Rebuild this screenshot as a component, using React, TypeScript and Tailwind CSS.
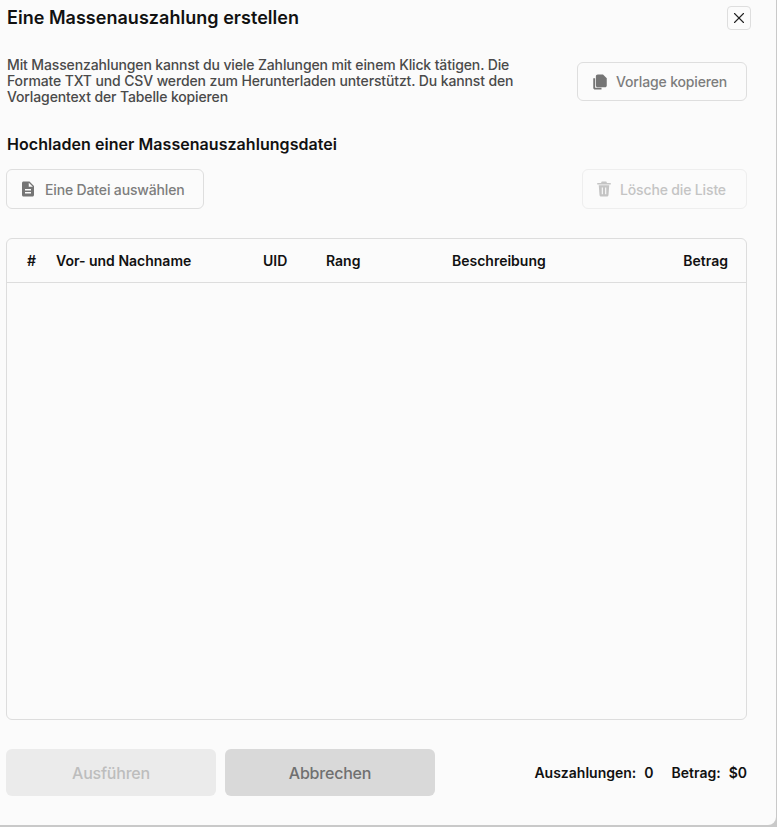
import { X } from "lucide-react";

const font = { fontFamily: "Inter, sans-serif" };

function FileIcon() {
  return (
    <svg viewBox="0 0 24 24" className="w-[18px] h-[18px] fill-[#757575]">
      <path d="M14 2H6c-1.1 0-2 .9-2 2v16c0 1.1.9 2 2 2h12c1.100 0 2-.9 2-2V8l-6-6zm2 16H8v-2h8v2zm0-4H8v-2h8v2zm-3-5V3.500L18.500 9H13z" />
    </svg>
  );
}

function CopyIcon() {
  return (
    <svg viewBox="0 0 24 24" className="w-[18px] h-[18px] fill-[#757575]">
      <path d="M3 7h2.500v12.500H14V22H5.500C4 22 3 21 3 19.500V7z" />
      <path d="M9 2h7l5 5v9.500c0 1.400-1 2.500-2.500 2.500H9c-1.400 0-2.500-1-2.500-2.500v-12C6.500 3 7.600 2 9 2z" />
    </svg>
  );
}

function TrashIcon() {
  return (
    <svg viewBox="0 0 24 24" className="w-[18px] h-[18px] fill-[#c4c4c4]">
      <path d="M9 2h6l1 2h5v2H3V4h5l1-2z" />
      <path d="M5 7h14l-1 13c0 1.100-.9 2-2 2H8c-1.100 0-2-.9-2-2L5 7zm4 3v9h1.500v-9H9zm4.500 0v9H15v-9h-1.500z" fillRule="evenodd" />
    </svg>
  );
}

export default function App() {
  return (
    <div className="w-[777px] h-[827px] bg-[#c9c9c9] overflow-hidden" style={font}>
      <div className="w-[776px] h-[825px] bg-[#fbfbfb] rounded-br-[8px] pl-[6px] pr-[29px] flex flex-col">
        {/* Title */}
        <div className="flex items-start justify-between h-[62px] pt-[6px] mr-[-4px]">
          <h1 className="ml-[1px] text-[18px] leading-[24px] font-semibold tracking-[0.03px] text-[#111]">
            Eine Massenauszahlung erstellen
          </h1>
          <button className="w-[24px] h-[24px] border border-[#dedede] rounded-[4px] flex items-center justify-center text-[#222]">
            <X size={18} strokeWidth={1.5} />
          </button>
        </div>

        {/* Intro */}
        <div className="flex items-start justify-between h-[62px]">
          <p className="ml-[1px] w-[520px] text-[14px] leading-[16px] tracking-[-0.13px] font-medium text-[#4a4a4a] mt-[-5px]">
            Mit Massenzahlungen kannst du viele Zahlungen mit einem Klick tätigen. Die Formate TXT und CSV werden zum Herunterladen unterstützt. Du kannst den Vorlagentext der Tabelle kopieren
          </p>
          <button className="w-[170px] h-[39px] border border-[#dedede] rounded-[6px] flex items-center pl-[13px] gap-[7px] text-[14px] tracking-[-0.15px] font-medium text-[#7d7d7d]">
            <CopyIcon />
            Vorlage kopieren
          </button>
        </div>

        <h2 className="ml-[1px] text-[16px] leading-[20px] font-semibold tracking-[0.05px] text-[#111] h-[36px] mt-[10px]">
          Hochladen einer Massenauszahlungsdatei
        </h2>

        {/* File actions */}
        <div className="flex items-start justify-between h-[69px] mt-[-1px]">
          <button className="w-[198px] h-[40px] border border-[#dedede] rounded-[6px] flex items-center pl-[12px] gap-[8px] text-[14px] tracking-[-0.15px] font-medium text-[#7d7d7d]">
            <FileIcon />
            Eine Datei auswählen
          </button>
          <button className="w-[165px] h-[40px] border border-[#eeeeee] rounded-[6px] flex items-center pl-[12px] gap-[7px] text-[14px] tracking-[-0.15px] font-medium text-[#c4c4c4]">
            <TrashIcon />
            Lösche die Liste
          </button>
        </div>

        {/* Table */}
        <div className="h-[482px] border border-[#dddddd] rounded-[6px]">
          <div className="h-[44px] border-b border-[#dddddd] flex items-center pb-[1px] text-[14px] font-semibold text-[#111] pr-[18px]">
            <span className="w-[49px] pl-[20px]">#</span>
            <span className="w-[207px]">Vor- und Nachname</span>
            <span className="w-[63px]">UID</span>
            <span className="w-[126px]">Rang</span>
            <span className="flex-1">Beschreibung</span>
            <span>Betrag</span>
          </div>
        </div>

        {/* Footer */}
        <div className="flex items-center mt-[29px]">
          <button className="w-[210px] h-[47px] rounded-[6px] bg-[#ebebeb] text-[16px] tracking-[-0.2px] font-medium text-[#bdbdbd]">
            Ausführen
          </button>
          <button className="w-[210px] h-[47px] rounded-[6px] bg-[#d9d9d9] text-[16px] tracking-[-0.2px] font-medium text-[#707070] ml-[9px]">
            Abbrechen
          </button>
          <div className="ml-auto flex gap-[18px] text-[14px] font-semibold text-[#111]">
            <span className="flex gap-[8px]"><span>Auszahlungen:</span><span>0</span></span>
            <span className="flex gap-[8px]"><span>Betrag:</span><span>$0</span></span>
          </div>
        </div>
      </div>
    </div>
  );
}
